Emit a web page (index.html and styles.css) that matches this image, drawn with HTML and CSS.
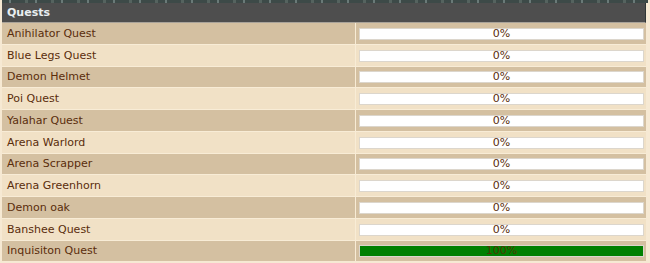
FILE: index.html
```html
<!DOCTYPE html>
<html>
<head>
<meta charset="utf-8">
<link rel="stylesheet" href="styles.css">
</head>
<body>
<div class="strip"></div>
<div class="panel">
  <div class="head">Quests</div>
  <div class="rows">
    <div class="name odd">Anihilator Quest</div><div class="cell odd"><div class="bar"><div class="fill" style="width:0%"></div><span class="pct">0%</span></div></div>
    <div class="name even">Blue Legs Quest</div><div class="cell even"><div class="bar"><div class="fill" style="width:0%"></div><span class="pct">0%</span></div></div>
    <div class="name odd">Demon Helmet</div><div class="cell odd"><div class="bar"><div class="fill" style="width:0%"></div><span class="pct">0%</span></div></div>
    <div class="name even">Poi Quest</div><div class="cell even"><div class="bar"><div class="fill" style="width:0%"></div><span class="pct">0%</span></div></div>
    <div class="name odd">Yalahar Quest</div><div class="cell odd"><div class="bar"><div class="fill" style="width:0%"></div><span class="pct">0%</span></div></div>
    <div class="name even">Arena Warlord</div><div class="cell even"><div class="bar"><div class="fill" style="width:0%"></div><span class="pct">0%</span></div></div>
    <div class="name odd">Arena Scrapper</div><div class="cell odd"><div class="bar"><div class="fill" style="width:0%"></div><span class="pct">0%</span></div></div>
    <div class="name even">Arena Greenhorn</div><div class="cell even"><div class="bar"><div class="fill" style="width:0%"></div><span class="pct">0%</span></div></div>
    <div class="name odd">Demon oak</div><div class="cell odd"><div class="bar"><div class="fill" style="width:0%"></div><span class="pct">0%</span></div></div>
    <div class="name even">Banshee Quest</div><div class="cell even"><div class="bar"><div class="fill" style="width:0%"></div><span class="pct">0%</span></div></div>
    <div class="name odd">Inquisiton Quest</div><div class="cell odd"><div class="bar"><div class="fill" style="width:100%"></div><span class="pct">100%</span></div></div>
  </div>
</div>
</body>
</html>
```
FILE: styles.css
```css
html, body {
  margin: 0;
  padding: 0;
  background: #f6e9d3;
  font-family: "DejaVu Sans", Verdana, sans-serif;
  font-size: 11px;
  color: #5a2d0c;
  overflow: hidden;
}
.strip {
  height: 3px;
  margin: 0 2px 0 2px;
  background: repeating-linear-gradient(90deg, #3d4a48 0 7px, #6a7a78 7px 9px, #3d4a48 9px 23px, #55635f 23px 26px);
}
.panel {
  width: 644px;
  margin-left: 2px;
}
.head {
  height: 19px;
  line-height: 19px;
  background: #4e4e4e;
  border-right: 1px solid #2f3636;
  border-bottom: 1px solid #a9a39a;
  color: #e9eef0;
  font-weight: bold;
  padding-left: 5px;
}
.rows {
  display: grid;
  grid-template-columns: 353px 290px;
  grid-auto-rows: 20.75px;
  gap: 1px;
  background: #f8ecd6;
}
.odd { background: #d4c0a1; }
.even { background: #f1e1c6; }
.name {
  padding-left: 5px;
  display: flex;
  align-items: center;
  white-space: nowrap;
}
.cell {
  display: flex;
  align-items: center;
  padding: 1px 2px 0 3px;
}
.bar {
  position: relative;
  flex: 1;
  height: 10px;
  background: #ffffff;
  border: 1px solid #dcd6cc;
}
.fill {
  position: absolute;
  left: 0;
  top: 0;
  bottom: 0;
  background: #008000;
}
.pct {
  position: absolute;
  left: 0;
  right: 0;
  top: -2px;
  text-align: center;
  line-height: 14px;
  color: #5a2d0c;
}
.odd:last-child .pct { color: #4a3a00; }
```
